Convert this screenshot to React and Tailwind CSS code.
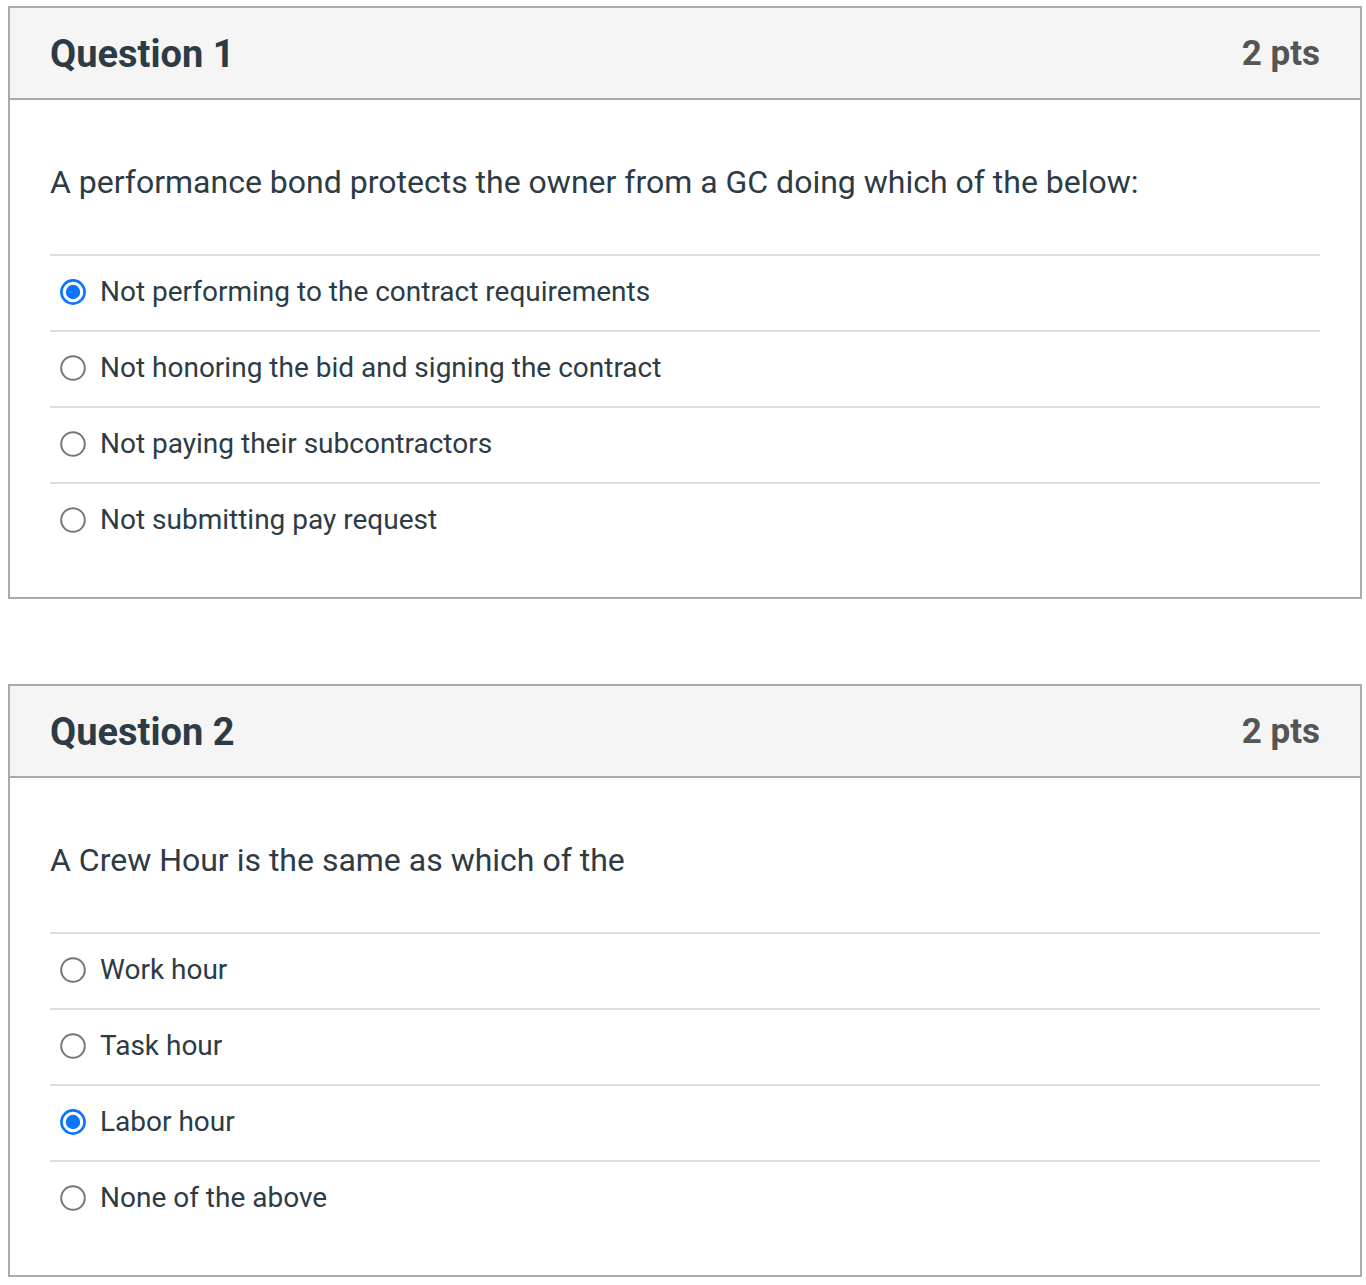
import React from "react";

const questions = [
    {
        title: "Question 1",
        points: "2 pts",
        text: "A performance bond protects the owner from a GC doing which of the below:",
        answers: [
            "Not performing to the contract requirements",
            "Not honoring the bid and signing the contract",
            "Not paying their subcontractors",
            "Not submitting pay request",
        ],
        selected: 0,
    },
    {
        title: "Question 2",
        points: "2 pts",
        text: "A Crew Hour is the same as which of the",
        answers: ["Work hour", "Task hour", "Labor hour", "None of the above"],
        selected: 2,
    },
];

function Radio({ checked }) {
    return (
        <svg viewBox="0 0 26 26" className="w-[26px] h-[26px] shrink-0" aria-hidden="true">
            {checked ? (
                <>
                    <circle cx="13" cy="13" r="11.6" fill="white" stroke="#0a74ff" strokeWidth="2.6" />
                    <circle cx="13" cy="13" r="7.2" fill="#0a74ff" />
                </>
            ) : (
                <circle cx="13" cy="13" r="11.8" fill="white" stroke="#767676" strokeWidth="2" />
            )}
        </svg>
    );
}

function QuestionCard({ q }) {
    return (
        <div className="border-2 border-[#aaaaaa] bg-white">
            {/* header */}
            <div className="h-[92px] bg-[#f5f5f5] border-b-2 border-[#aaaaaa] px-[40px] flex items-center justify-between">
                <h2 className="text-[38px] font-bold text-[#2d3b45] leading-none pt-[1px]">{q.title}</h2>
                <span className="text-[35px] font-bold text-[#555555] leading-none pt-[1px]">{q.points}</span>
            </div>

            {/* body */}
            <div className="px-[40px] pt-[58px] pb-[39px]">
                <p className="text-[32px] leading-[48px] text-[#2d3b45] mb-[48px]">{q.text}</p>
                <div>
                    {q.answers.map((a, i) => (
                        <label
                            key={a}
                            className="h-[76px] border-t-2 border-[#dddddd] flex items-center gap-[14px] pl-[10px] pb-[2px]"
                        >
                            <Radio checked={i === q.selected} />
                            <span className="text-[28px] text-[#2d3b45] leading-none">{a}</span>
                        </label>
                    ))}
                </div>
            </div>
        </div>
    );
}

export default function App() {
    return (
        <div
            className="min-h-screen bg-white pl-[8px] pr-[4px] pt-[6px] flex flex-col gap-[85px]"
            style={{ fontFamily: "Roboto, 'Liberation Sans', sans-serif" }}
        >
            {questions.map((q) => (
                <QuestionCard key={q.title} q={q} />
            ))}
        </div>
    );
}
